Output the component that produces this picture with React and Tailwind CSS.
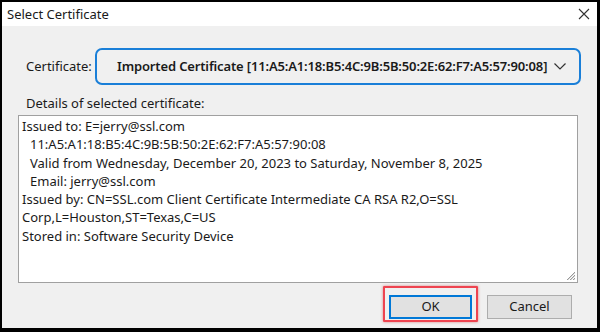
import React from "react";

const font = { fontFamily: '"Noto Sans", "Open Sans", sans-serif' };

export default function App() {
  return (
    <div
      className="w-[600px] h-[332px] bg-black pt-[2px] pl-[2px] pr-[3px] pb-[4px] flex flex-col"
      style={font}
    >
      <div className="h-[24px] bg-white flex items-center justify-between pl-[5px] pr-[6px] shrink-0">
        <span className="text-[13px] text-[#1a1a1a] leading-none">Select Certificate</span>
        <svg width="12" height="12" viewBox="0 0 12 12" className="mr-[1px]">
          <path d="M1 1 L11 11 M11 1 L1 11" stroke="#333" strokeWidth="1.1" fill="none" />
        </svg>
      </div>
      <div className="relative flex-1 bg-[#f0f0f0] flex flex-col">
        <div className="flex items-center mt-[22px] pl-[24px] pr-[16px]">
          <span className="text-[13px] text-[#1a1a1a] w-[69px]">Certificate:</span>
          <div className="flex-1 h-[37px] border-2 border-[#1a7fd8] rounded-[7px] bg-[#f0f0f0] flex items-center pl-[20px] pr-[13px] justify-between">
            <span className="text-[13px] font-semibold text-[#1a1a1a] whitespace-nowrap tracking-[-0.15px]">
              Imported Certificate [11:A5:A1:18:B5:4C:9B:5B:50:2E:62:F7:A5:57:90:08]
            </span>
            <svg width="12" height="7" viewBox="0 0 12 7">
              <path d="M0.5 0.5 L6 6 L11.5 0.5" stroke="#333" strokeWidth="1.2" fill="none" />
            </svg>
          </div>
        </div>
        <div className="pl-[24px] mt-[9px] text-[13px] text-[#1a1a1a] leading-[18px]">
          Details of selected certificate:
        </div>
        <div className="ml-[16px] mr-[19px] mt-[3px] h-[168px] bg-white border border-[#a0a0a0] relative pl-[3px] pt-[1px] text-[13px] leading-[18.3px] text-[#1a1a1a]">
          <div>Issued to: E=jerry@ssl.com</div>
          <div className="pl-[8px]">11:A5:A1:18:B5:4C:9B:5B:50:2E:62:F7:A5:57:90:08</div>
          <div className="pl-[8px]">Valid from Wednesday, December 20, 2023 to Saturday, November 8, 2025</div>
          <div className="pl-[8px]">Email: jerry@ssl.com</div>
          <div>Issued by: CN=SSL.com Client Certificate Intermediate CA RSA R2,O=SSL</div>
          <div>Corp,L=Houston,ST=Texas,C=US</div>
          <div>Stored in: Software Security Device</div>
          <svg width="12" height="12" viewBox="0 0 12 12" className="absolute right-[1px] bottom-[1px]">
            <path d="M11 3 L3 11 M11 6 L6 11 M11 9 L9 11" stroke="#9a9a9a" strokeWidth="1" fill="none" />
            <path d="M11 4 L4 11 M11 7 L7 11 M11 10 L10 11" stroke="#d8d8d8" strokeWidth="1" fill="none" />
          </svg>
        </div>
        <div className="flex justify-end gap-[15px] mt-[12px] pr-[25px]">
          <div className="relative">
            <div className="absolute -left-[6px] -right-[6px] -top-[9px] -bottom-[3px] border-2 border-[#ee4450] rounded-[1px] shadow-[0_0_3px_rgba(200,60,60,0.6)]" />
            <button className="w-[83px] h-[24px] bg-[#e1e1e1] border-2 border-[#0078d7] text-[13px] text-[#1a1a1a] flex items-center justify-center">
              OK
            </button>
          </div>
          <button className="w-[85px] h-[24px] bg-[#e1e1e1] border border-[#adadad] text-[13px] text-[#1a1a1a] flex items-center justify-center">
            Cancel
          </button>
        </div>
      </div>
    </div>
  );
}
